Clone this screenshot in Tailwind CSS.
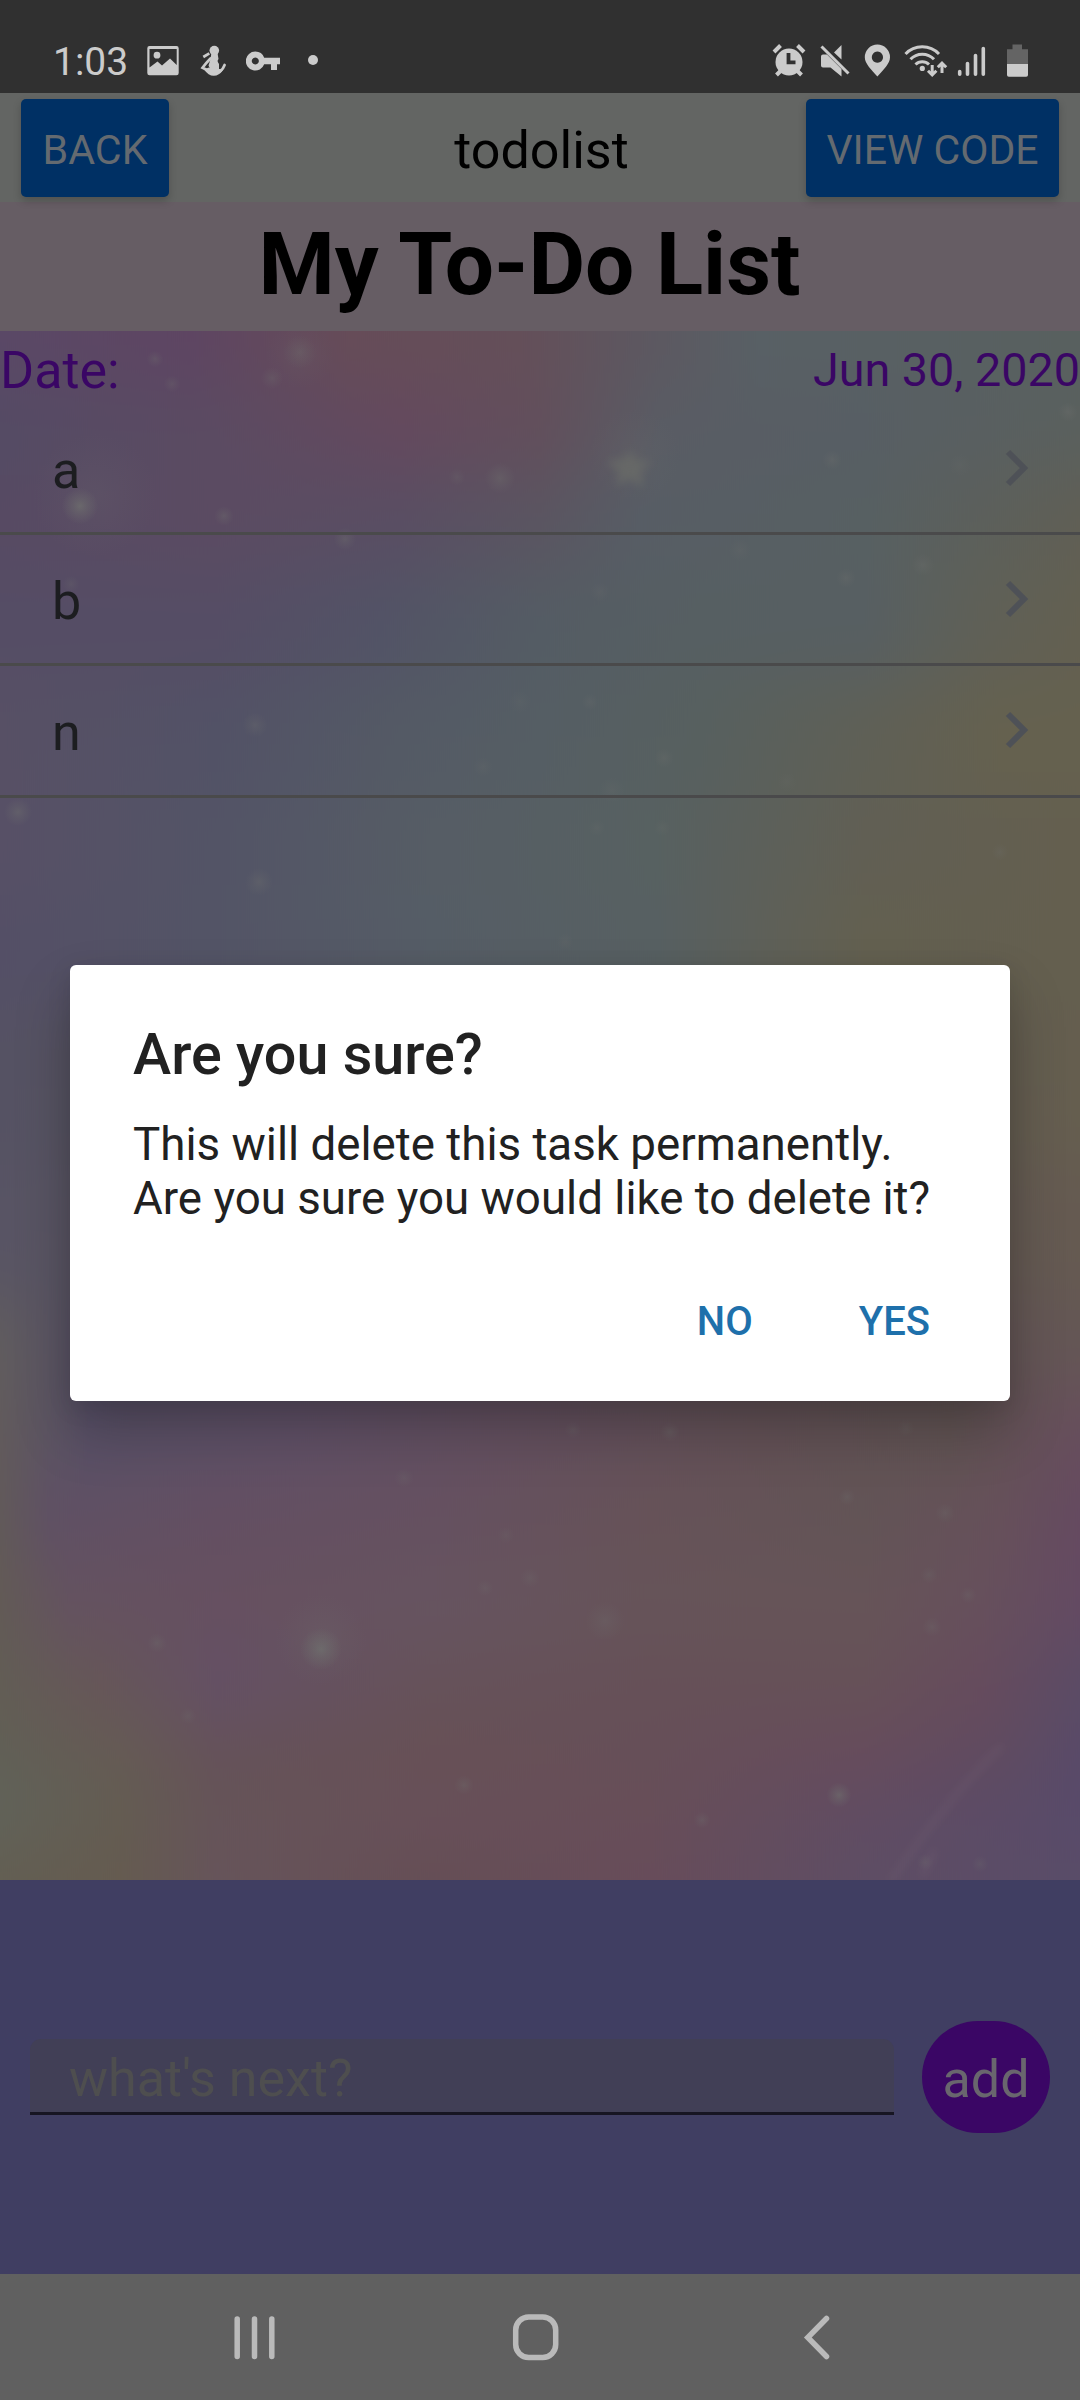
<!DOCTYPE html>
<html lang="en">
<head>
<meta charset="utf-8">
<title>todolist</title>
<script src="https://cdn.jsdelivr.net/npm/@tailwindcss/browser@4"></script>
</head>
<body class="bg-[#606060]">
<div class="relative flex h-[2400px] w-[1080px] flex-col overflow-hidden font-['Roboto',sans-serif] whitespace-nowrap">

  <!-- status bar -->
  <div class="flex h-[93px] shrink-0 items-start bg-[#303030] pt-[44px] pl-[53px] text-[#cbcbcb]">
    <div class="w-[94px] pt-px text-[39px] leading-[34px]">1:03</div>
    <svg class="h-[32px] w-[32px]" viewBox="147 44 32 32" fill="currentColor"><path fill-rule="evenodd" d="M149.500 46H176.500a2.200 2.200 0 0 1 2.200 2.200V73a2.200 2.200 0 0 1-2.200 2.200H149.500a2.200 2.200 0 0 1-2.200-2.200V48.200a2.200 2.200 0 0 1 2.200-2.200zM149.500 49V67.500L157.500 61.500L162 65.500L170 58.500L176.700 65V49zM157 51.800a3.400 3.400 0 1 1 0 6.800a3.400 3.400 0 1 1 0-6.800z"/></svg>
    <svg class="ml-[21px] h-[32px] w-[28px]" viewBox="200 44 28 32" fill="currentColor"><circle cx="214.300" cy="50.600" r="4.800"/><path d="M211.500 53h6l1 6c-1.500 1.500-1 3 .5 5v6h-8.500l-2-4.500 1.500-4.500z"/><path d="M203.300 57l6-3.600" stroke="currentColor" stroke-width="2.800" fill="none"/><path d="M210.500 58.500Q206 63 202.500 67.800L213 73Q221.500 73.500 224.600 65" stroke="currentColor" stroke-width="2.700" fill="none" stroke-linecap="round"/><path d="M204 69.500l5-2 2 1.500h9l3 1q-4 6-9.500 5.800-5 0-9.500-6.300z"/></svg>
    <svg class="ml-[18px] h-[32px] w-[36px]" viewBox="246 44 36 32" fill="currentColor"><path fill-rule="evenodd" d="M255.300 51.500a9.500 9.500 0 0 1 8.900 6.300H280V64.300H277V70H271V64.300H264.200A9.500 9.500 0 1 1 255.300 51.500zM255.300 57.500a3.500 3.500 0 1 0 .01 0z"/></svg>
    <div class="mt-[11px] ml-[26px] size-[10px] rounded-full bg-[#cbcbcb]"></div>
    <svg class="ml-[454px] h-[34px] w-[34px]" viewBox="772 44 34 34" fill="none" stroke="currentColor"><circle cx="789" cy="62" r="13.500" fill="currentColor" stroke="none"/><path d="M774 52l6.500-6.500M804 52l-6.500-6.500" stroke-width="4"/><path d="M776.500 75l5-5M801.500 75l-5-5" stroke-width="4"/><path d="M788.500 53v9.300h7" stroke="#303030" stroke-width="3.800"/></svg>
    <svg class="ml-[14px] h-[34px] w-[32px]" viewBox="820 44 32 34" fill="currentColor"><path d="M834 52.500l7.500-7.500v14.500z"/><path d="M821.500 46.500L848.500 73.500" stroke="currentColor" stroke-width="3"/><path d="M821 56.500q0-2 2-2h4l14.500 14.500v7.500l-11-9H823q-2 0-2-2z"/></svg>
    <svg class="ml-[12px] h-[34px] w-[27px]" viewBox="864 44 27 34" fill="currentColor"><path fill-rule="evenodd" d="M877.400 44.600a12.600 12.600 0 0 1 12.600 12.600c0 6.500-6.500 12.300-12.600 19.300c-6.100-7-12.600-12.800-12.600-19.300a12.600 12.600 0 0 1 12.600-12.600zM877.400 51.600a5.600 5.600 0 1 0 .01 0z"/></svg>
    <svg class="ml-[13px] h-[34px] w-[44px]" viewBox="904 44 44 34" fill="none" stroke="currentColor" stroke-width="3"><path d="M905.500 54a23 23 0 0 1 33.500 0M910.500 59.300a16 16 0 0 1 23.500 0M915.500 64.500a9.500 9.500 0 0 1 13.500 0"/><circle cx="922.300" cy="68.400" r="2.600" fill="currentColor" stroke="none"/><path d="M932.200 65v10M928 70.800l4.200 4.200 4.200-4.200M942 73V63M937.800 67.200l4.200-4.200 4.200 4.200"/></svg>
    <svg class="ml-[9px] h-[34px] w-[30px]" viewBox="957 44 30 34" stroke="currentColor" stroke-width="3.600" stroke-linecap="round"><path d="M959.700 71.500v2.800M967.500 63.500v10.800M975.500 55.500v18.800M983.300 48.500v25.800"/></svg>
    <svg class="ml-[19px] h-[34px] w-[24px]" viewBox="1006 44 24 34"><path d="M1012.500 44.500h9.500v4.700h6V64h-21V49.200h5.500z" fill="#646464"/><path d="M1007 64h21v11q0 1.800-1.800 1.800h-17.400q-1.800 0-1.800-1.800z" fill="currentColor"/></svg>
  </div>

  <!-- app header -->
  <div class="z-10 flex h-[109px] shrink-0 items-center justify-between bg-[#636563] px-[21px]">
    <div class="flex h-[98px] w-[148px] items-center justify-center rounded-[5px] bg-[#003064] pt-[6px] text-[41.2px] text-[#646a70] shadow-[0_4px_9px_rgba(0,0,0,0.2)]">BACK</div>
    <div class="ml-[108px] pt-[6px] text-[52px] text-black">todolist</div>
    <div class="flex h-[98px] w-[253px] items-center justify-center rounded-[5px] bg-[#003064] pt-[6px] text-[41px] text-[#646a70] shadow-[0_4px_9px_rgba(0,0,0,0.2)]">VIEW CODE</div>
  </div>
  <div class="flex h-[129px] shrink-0 items-center justify-center bg-[#665d64] pr-[21px] pb-[4px] text-[87.2px] leading-none font-bold text-black">My To-Do List</div>

  <!-- task list over the galaxy wallpaper -->
  <div class="relative h-[1549px] shrink-0 overflow-hidden bg-[#5f5560]">
    <svg id="sky" class="absolute inset-0" width="1080" height="1549" viewBox="0 331 1080 1549"></svg>
    <div class="relative">
      <div class="flex h-[73px] items-center justify-between pt-[6px] text-[#3a0665]"><span class="text-[52px]">Date:</span><span class="pb-px text-[46.7px]">Jun 30, 2020</span></div>
      <div class="flex h-[131px] items-center justify-between border-b-[3px] border-[#4a4a4b] pr-[50px] pl-[52px] text-[52px] text-[#1c1d20]"><span class="pt-[5px]">a</span><svg class="h-[38px] w-[26px]" viewBox="0 0 26 38" fill="none" stroke="#4e5157" stroke-width="6"><path d="M4 3l16 16-16 16"/></svg></div>
      <div class="flex h-[131px] items-center justify-between border-b-[3px] border-[#4a4a4b] pr-[50px] pl-[52px] text-[52px] text-[#1c1d20]"><span class="pt-[5px]">b</span><svg class="h-[38px] w-[26px]" viewBox="0 0 26 38" fill="none" stroke="#4e5157" stroke-width="6"><path d="M4 3l16 16-16 16"/></svg></div>
      <div class="flex h-[132px] items-center justify-between border-b-[3px] border-[#4a4a4b] pr-[50px] pl-[52px] text-[52px] text-[#1c1d20]"><span class="pt-[4px]">n</span><svg class="mb-px h-[38px] w-[26px]" viewBox="0 0 26 38" fill="none" stroke="#4e5157" stroke-width="6"><path d="M4 3l16 16-16 16"/></svg></div>
    </div>
  </div>

  <!-- new task form -->
  <div class="flex h-[394px] shrink-0 items-center justify-between bg-[#403e62] px-[30px]">
    <div class="flex h-[76px] w-[864px] items-center rounded-t-[11px] border-b-[3px] border-[#171522] bg-[#413f56] pt-[7px] pl-[39px] text-[52px] leading-none text-[#4e4e4f]">what's next?</div>
    <div class="flex h-[112px] w-[128px] items-center justify-center rounded-full bg-[#3a0665] pt-[5px] text-[52px] text-[#69666e]">add</div>
  </div>

  <!-- navigation bar -->
  <div class="flex h-[126px] shrink-0 items-start bg-[#606060] pt-[38px] pl-[230px]">
    <svg class="h-[50px] w-[50px]" viewBox="230 2312 50 50" stroke="#bababa" stroke-width="5.500" stroke-linecap="round"><path d="M237.200 2319v37.500M254.500 2319v37.500M271.800 2319v37.500"/></svg>
    <svg class="ml-[230px] h-[50px] w-[50px]" viewBox="510 2312 50 50" fill="none" stroke="#bababa" stroke-width="5.500"><rect x="515.700" y="2317" width="40" height="40.500" rx="13"/></svg>
    <svg class="ml-[240px] h-[50px] w-[34px]" viewBox="800 2312 34 50" fill="none" stroke="#bababa" stroke-width="5.500" stroke-linecap="round"><path d="M826.500 2318.500L807.800 2337.500L826.500 2356.500"/></svg>
  </div>

  <!-- confirmation dialog -->
  <div class="absolute top-[965px] left-[70px] z-20 flex h-[436px] w-[940px] flex-col rounded-[6px] bg-white pt-[56px] pr-[80px] pl-[63px] text-[#212121] shadow-[0_30px_56px_rgba(0,0,0,0.22),0_6px_24px_rgba(0,0,0,0.1)]">
    <div class="text-[57.5px] leading-[68px] font-medium">Are you sure?</div>
    <div class="mt-[29px] text-[45.7px] leading-[54px]">This will delete this task permanently.<br>Are you sure you would like to delete it?</div>
    <div class="mt-[72px] flex justify-end gap-[106px] text-[40px] leading-[48px] font-medium text-[#1e70ab]"><span>NO</span><span>YES</span></div>
  </div>
</div>

<script>
// Wallpaper: each band is [centre y, x, colour, x, colour, ...], blended vertically by blur.
const bands = [
  [345, 0,'#5a4866',190,'#5e4562',350,'#664c58',520,'#644f59',640,'#5d5760',760,'#586065',1080,'#58605f'],
  [430, 0,'#544b64',216,'#5b4b62',400,'#64495e',540,'#624f5c',660,'#595c64',864,'#575e64',1080,'#5a605e'],
  [520, 0,'#574a63',216,'#5b4b62',400,'#594e63',540,'#5a5561',640,'#575d65',864,'#576062',1080,'#605f55'],
  [620, 0,'#554d65',216,'#554d65',380,'#525366',540,'#545c64',700,'#565f62',864,'#575f62',980,'#5f6057',1080,'#636051'],
  [740, 0,'#575065',216,'#525266',400,'#545a65',540,'#555e64',700,'#57605f',864,'#5f6056',1000,'#65614f',1080,'#65614f'],
  [850, 0,'#575066',216,'#535466',432,'#565d65',648,'#576161',864,'#615f54',1080,'#645f4f'],
  [940, 0,'#544f66',216,'#535466',432,'#555d66',660,'#576062',780,'#5f6057',864,'#636050',1080,'#645f4f'],
  [1080, 0,'#555263',1080,'#655e4f'],
  [1250, 0,'#585464',1080,'#655a51'],
  [1350, 0,'#605c5e',90,'#575066',400,'#5d5062',750,'#605358',1080,'#645655'],
  [1430, 0,'#615a5c',90,'#585067',300,'#605067',500,'#645060',750,'#635056',950,'#605352',1080,'#674e5c'],
  [1510, 0,'#61595a',50,'#5f5064',216,'#634f62',432,'#655060',648,'#665258',864,'#625456',1000,'#66505a',1080,'#654a60'],
  [1600, 0,'#625a56',70,'#645260',216,'#665060',432,'#665460',648,'#665459',864,'#665458',980,'#66505c',1080,'#644a62'],
  [1690, 0,'#625d55',100,'#665658',216,'#645065',432,'#66525a',648,'#665058',864,'#665158',980,'#664b5d',1080,'#5b4b65'],
  [1755, 0,'#615f55',120,'#655b54',216,'#655258',432,'#675055',648,'#664f58',864,'#674b5c',1000,'#5f4b60',1080,'#594a68'],
  [1810, 0,'#60635a',120,'#635c52',216,'#655458',432,'#68505a',648,'#674e58',864,'#604c62',1080,'#584a6a'],
  [1870, 0,'#635e52',120,'#655b50',216,'#66545a',432,'#654e55',648,'#674c5a',864,'#5e4d64',1080,'#594c68']
];
// Stars: [x, y, radius, opacity]
const stars = [[155,359,6,.4],[172,384,6,.35],[300,352,12,.4],[272,378,8,.4],[80,506,13,1],[224,516,7,.5],[457,477,6,.3],[500,478,11,.5],[345,539,8,.5],[71,584,6,.3],[255,725,9,.4],[18,812,10,.6],[483,767,7,.25],[520,702,8,.2],[832,460,7,.4],[1068,412,7,.45],[960,465,8,.2],[740,550,8,.25],[923,565,8,.4],[846,578,7,.4],[600,592,7,.25],[590,702,6,.3],[664,758,7,.35],[787,782,7,.2],[612,790,9,.25],[259,882,10,.45],[565,942,6,.25],[1000,852,6,.3],[597,828,6,.25],[662,828,6,.25],[573,1430,6,.3],[670,1432,7,.4],[906,1428,6,.25],[404,1478,7,.3],[847,1497,6,.35],[945,1513,7,.35],[506,1535,6,.25],[530,1578,7,.3],[485,1588,6,.3],[929,1575,6,.3],[968,1595,6,.35],[932,1627,7,.35],[605,1621,14,.35],[157,1643,7,.4],[321,1649,15,1],[188,1716,6,.3],[464,1785,7,.4],[839,1795,9,.8],[702,1820,6,.4],[925,1862,6,.35],[980,1864,6,.3]];
let defs = '<filter id="v" filterUnits="userSpaceOnUse" x="0" y="200" width="1080" height="1800" color-interpolation-filters="sRGB"><feGaussianBlur stdDeviation="0 34"/></filter><filter id="s" x="-1" y="-1" width="3" height="3" color-interpolation-filters="sRGB"><feGaussianBlur stdDeviation="4.5"/></filter><radialGradient id="g"><stop offset="0" stop-color="#6f706e"/><stop offset=".35" stop-color="#6f706e" stop-opacity=".6"/><stop offset="1" stop-color="#6f706e" stop-opacity="0"/></radialGradient>';
let rects = '';
bands.forEach((b, i) => {
  const top = i ? (bands[i-1][0] + b[0]) / 2 : 200;
  const end = i < bands.length - 1 ? (b[0] + bands[i+1][0]) / 2 : 2000;
  let stops = '';
  for (let k = 1; k < b.length; k += 2) stops += `<stop offset="${b[k] / 1080}" stop-color="${b[k+1]}"/>`;
  defs += `<linearGradient id="b${i}">${stops}</linearGradient>`;
  rects += `<rect x="0" y="${top}" width="1080" height="${end - top + 1}" fill="url(#b${i})"/>`;
});
let dots = '<circle cx="95" cy="495" r="62" fill="url(#g)" opacity=".16"/><circle cx="321" cy="1640" r="46" fill="url(#g)" opacity=".22"/><circle cx="635" cy="455" r="46" fill="url(#g)" opacity=".15"/><circle cx="300" cy="355" r="34" fill="url(#g)" opacity=".15"/>';
stars.forEach(([x, y, r, o]) => { dots += `<circle cx="${x}" cy="${y}" r="${r * 1.4}" fill="url(#g)" opacity="${o * .75}"/>`; });
dots += '<path filter="url(#s)" d="M630 450l6 10 16 1-11 10 2 17-13-9-14 7 3-14-13-11 17-2z" fill="#6a6c68" opacity=".75"/>';
dots += '<path filter="url(#s)" d="M1002 1746Q950 1795 890 1882M922 1876L935 1850" fill="none" stroke="#80707c" stroke-width="4" opacity=".28"/>';
document.getElementById('sky').innerHTML = `<defs>${defs}</defs><g filter="url(#v)">${rects}</g>${dots}`;
</script>
</body>
</html>
